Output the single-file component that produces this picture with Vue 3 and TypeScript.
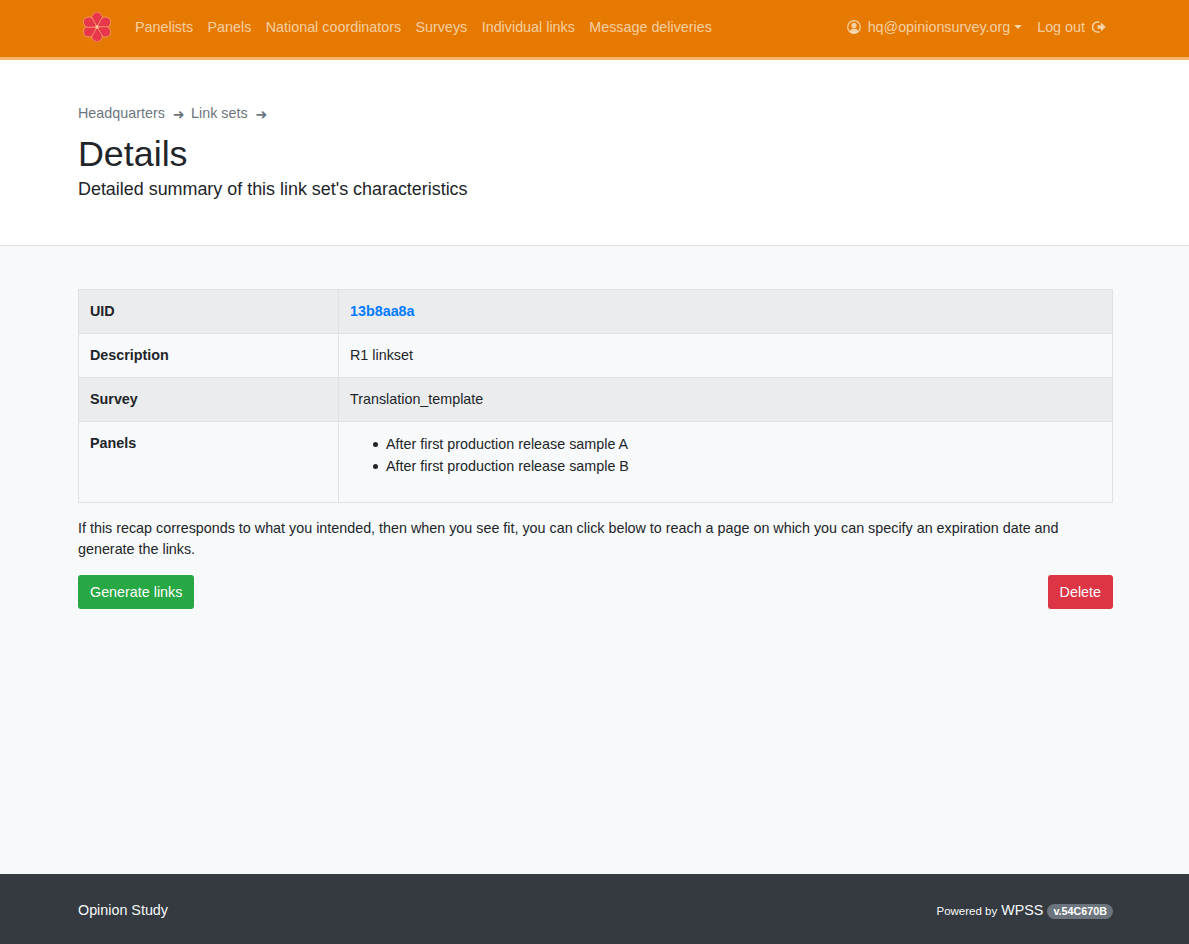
<script setup lang="ts">
const navLinks = ['Panelists', 'Panels', 'National coordinators', 'Surveys', 'Individual links', 'Message deliveries'];
const petals = [0, 60, 120, 180, 240, 300];
</script>

<template>
  <div class="page">
    <nav class="navbar">
      <div class="container nav-inner">
        <svg class="logo" width="30" height="30" viewBox="1 1 28 28" aria-hidden="true">
          <g v-for="a in petals" :key="a" :transform="`rotate(${a} 15 15)`">
            <path d="M15 15 L10.95 8.57 A4.8 4.8 0 1 1 19.05 8.57 Z" fill="#e8364a" stroke="#f5a070" stroke-width="0.7" />
          </g>
          <circle cx="15" cy="15" r="1.6" fill="#f9c6a0" />
        </svg>
        <ul class="nav-links">
          <li v-for="link in navLinks" :key="link"><a href="#">{{ link }}</a></li>
        </ul>
        <div class="nav-right">
          <a href="#" class="user">
            <svg width="14" height="14" viewBox="0 0 14 14" aria-hidden="true">
              <circle cx="7" cy="7" r="6.3" fill="none" stroke="currentColor" stroke-width="1.2" />
              <circle cx="7" cy="5.4" r="2.6" fill="currentColor" />
              <path d="M2.8 11.4 C3.6 9.2 5.2 8.6 7 8.6 C8.8 8.6 10.4 9.2 11.2 11.4 C10 12.6 8.5 13 7 13 C5.5 13 4 12.6 2.8 11.4 Z" fill="currentColor" />
            </svg>
            <span>hq@opinionsurvey.org</span>
            <i class="caret"></i>
          </a>
          <a href="#" class="logout">
            <span>Log out</span>
            <svg width="14" height="14" viewBox="0 0 14 14" aria-hidden="true">
              <path d="M7.5 2 H5.5 A5 5 0 0 0 5.5 12 H7.5" fill="none" stroke="currentColor" stroke-width="1.6" />
              <path d="M5.5 5.2 H9 V2.6 L13.8 7 L9 11.4 V8.8 H5.5 Z" fill="currentColor" />
            </svg>
          </a>
        </div>
      </div>
    </nav>

    <header class="page-head">
      <div class="container">
        <div class="crumbs">
          <a href="#">Headquarters</a>
          <span class="arrow">➜</span>
          <a href="#">Link sets</a>
          <span class="arrow">➜</span>
        </div>
        <h1>Details</h1>
        <p class="lead">Detailed summary of this link set's characteristics</p>
      </div>
    </header>

    <main class="content">
      <div class="container">
        <table class="details">
          <tbody>
            <tr class="odd">
              <th>UID</th>
              <td><a href="#" class="uid">13b8aa8a</a></td>
            </tr>
            <tr>
              <th>Description</th>
              <td>R1 linkset</td>
            </tr>
            <tr class="odd">
              <th>Survey</th>
              <td>Translation_template</td>
            </tr>
            <tr>
              <th>Panels</th>
              <td>
                <ul class="panels">
                  <li>After first production release sample A</li>
                  <li>After first production release sample B</li>
                </ul>
              </td>
            </tr>
          </tbody>
        </table>
        <p class="recap">If this recap corresponds to what you intended, then when you see fit, you can click below to reach a page on which you can specify an expiration date and generate the links.</p>
        <div class="actions">
          <a href="#" class="btn green">Generate links</a>
          <a href="#" class="btn red">Delete</a>
        </div>
      </div>
    </main>

    <footer class="footer">
      <div class="container foot-inner">
        <span class="study">Opinion Study</span>
        <span class="powered">Powered by <span class="wpss">WPSS</span> <span class="badge">v.54C670B</span></span>
      </div>
    </footer>
  </div>
</template>

<style scoped>
.page {
  min-height: 100vh;
  display: flex;
  flex-direction: column;
  font-family: "Liberation Sans", Arial, sans-serif;
  font-size: 14.336px;
  line-height: 1.5;
  color: #212529;
  background: #f8f9fa;
}

.container {
  box-sizing: border-box;
  width: 100%;
  padding: 0 76px 0 78px;
}

a {
  text-decoration: none;
}

.navbar {
  background: #e67a00;
  border-bottom: 3px solid #f6b56c;
  height: 57px;
  flex: none;
}

.nav-inner {
  display: flex;
  align-items: center;
  height: 55px;
}

.logo {
  margin: 0 23px 2px 4px;
  flex: none;
}

.nav-links {
  display: flex;
  gap: 14.4px;
  list-style: none;
  margin: 0;
  padding: 0;
}

.nav-links a,
.nav-right a {
  color: rgba(255, 255, 255, 0.65);
}

.nav-right {
  margin-left: auto;
  display: flex;
  align-items: center;
  gap: 15px;
  padding-right: 7px;
}

.user,
.logout {
  display: flex;
  align-items: center;
  gap: 7px;
}

.user svg,
.logout svg {
  flex: none;
}

.caret {
  width: 0;
  height: 0;
  margin-left: -3px;
  border-top: 4px solid currentColor;
  border-left: 4px solid transparent;
  border-right: 4px solid transparent;
}

.page-head {
  background: #fff;
  border-bottom: 1px solid #dee2e6;
  padding: 43px 0 42px;
  flex: none;
}

.crumbs {
  display: flex;
  align-items: center;
  gap: 8px;
  color: #6c757d;
  height: 22px;
}

.crumbs a {
  color: #6c757d;
}

.arrow {
  font-family: "DejaVu Sans", sans-serif;
  font-size: 14px;
  margin-right: -1.5px;
}

h1 {
  margin: 8px 0 0;
  font-size: 35.84px;
  font-weight: 400;
  line-height: 43px;
}

.lead {
  margin: 0;
  font-size: 17.92px;
  font-weight: 400;
  line-height: 27px;
}

.content {
  flex: 1;
  padding-top: 43px;
}

.details {
  width: 100%;
  border-collapse: collapse;
  margin-bottom: 15px;
}

.details th,
.details td {
  border: 1px solid #dee2e6;
  padding: 11px;
  vertical-align: top;
  text-align: left;
  line-height: 21px;
}

.details th {
  width: 237px;
  font-weight: 700;
}

.odd {
  background: #ebecee;
}

.uid {
  color: #007bff;
  font-weight: 700;
}

.panels {
  margin: 0 0 14px;
  padding-left: 36px;
  line-height: 22px;
  list-style: none;
}

.panels li {
  position: relative;
}

.panels li::before {
  content: "";
  position: absolute;
  left: -13px;
  top: 9px;
  width: 5px;
  height: 5px;
  border-radius: 50%;
  background: #212529;
}

.recap {
  margin: 0 0 15px;
  line-height: 21px;
}

.actions {
  display: flex;
  justify-content: space-between;
}

.btn {
  color: #fff;
  border-radius: 3px;
  padding: 6px 12px;
  line-height: 22px;
}

.green {
  background: #28a745;
}

.red {
  background: #dc3545;
}

.footer {
  background: #343a40;
  height: 70px;
  flex: none;
  color: #f8f9fa;
}

.foot-inner {
  height: 100%;
  display: flex;
  align-items: center;
  justify-content: space-between;
  padding-top: 3px;
}

.powered {
  font-size: 11.5px;
  display: flex;
  align-items: center;
  gap: 4px;
  margin-top: 2px;
}

.wpss {
  font-size: 14.336px;
  margin-top: -1px;
}

.badge {
  background: #6c757d;
  color: #fff;
  font-weight: 700;
  font-size: 10.75px;
  line-height: 1;
  padding: 2.5px 6px;
  border-radius: 8px;
}
</style>

<style>
body {
  margin: 0;
}
</style>
